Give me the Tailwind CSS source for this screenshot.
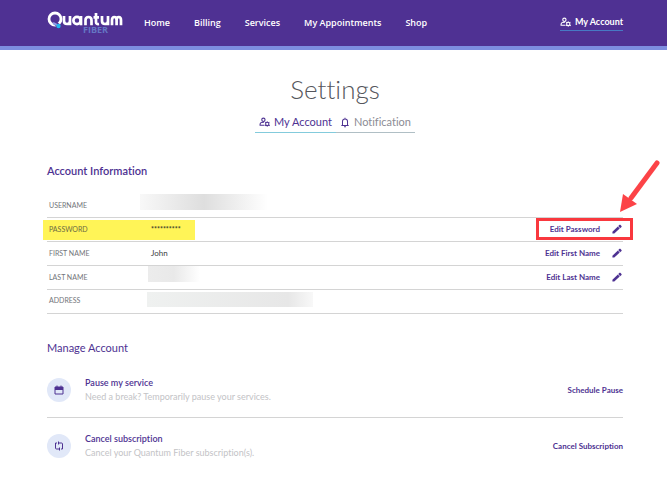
<!DOCTYPE html>
<html lang="en">
<head>
<meta charset="utf-8">
<meta name="viewport" content="width=device-width, initial-scale=1">
<title>Settings - Quantum Fiber</title>
<script src="https://cdn.jsdelivr.net/npm/@tailwindcss/browser@4"></script>
</head>
<body class="bg-white font-['Lato','Open_Sans',sans-serif] text-[#4e3292] [font-variant-ligatures:none]">
<svg class="hidden" aria-hidden="true">
  <symbol id="user-gear" viewBox="0 0 20 18">
    <g fill="none" stroke="currentColor" stroke-width="2">
      <circle cx="8" cy="5" r="3"/>
      <path d="M10 15H2v-2c0-2 3-3.500 7-3.500"/>
      <circle cx="15" cy="12.500" r="3"/>
    </g>
    <path fill="currentColor" d="M14 8h2v2h-2zM14 15h2v2h-2zM10.500 10l1-1.500 1.500 1-1 1.500zM17 15l1.500-1 1.500 1-1 1.500zM10.500 15l1.500-1 1 1.500-1.500 1zM17 9.500l1.500-1 1 1.500-1.500 1z"/>
  </symbol>
  <symbol id="pencil" viewBox="0 0 24 24">
    <path fill="currentColor" d="M1 18.500V23h4.500L18.500 11 14 6zM22.800 7a1.500 1.500 0 0 0 0-2L20 2a1.500 1.500 0 0 0-2 0L15 5l4.500 5z"/>
  </symbol>
</svg>

<header class="flex h-[50px] items-center border-b-4 border-[#7d8de0] bg-[#4f3193] pr-11 pl-[47px] text-white">
  <a href="#" aria-label="Quantum Fiber" class="w-[76px] shrink-0">
    <svg viewBox="0 0 76 24" class="block h-6 w-[76px]">
      <circle cx="8" cy="8" r="6" fill="none" stroke="#fff" stroke-width="2.800"/>
      <path d="M7 11l6 5" stroke="#4f3193" stroke-width="4"/>
      <path d="M6 12l4 2" stroke="#8f9be6" stroke-width="2"/>
      <circle cx="11.500" cy="15" r="2.200" fill="#22b5ee"/>
      <g fill="none" stroke="#fff" stroke-width="2.700">
        <path d="M17 5v5q0 3 3 3t3-3V5M23 9v5.300"/>
        <circle cx="30" cy="9.500" r="3.600"/><path d="M34 5v9.300"/>
        <path d="M38.500 14.300v-5q0-3.300 3-3.300t3 3.300v5"/>
        <path d="M49 2v9q0 2.500 3 2M46.500 6.300H52"/>
        <path d="M55 5v5q0 3 3 3t3-3V5M61 9v5.300"/>
        <path d="M65 14.300v-5q0-3.300 2.300-3.300t2.300 3.300v5M69.600 9.300q0-3.300 2.200-3.300t2.200 3.300v5"/>
      </g>
      <text x="36" y="22" fill="#6577c4" font-family="Open Sans" font-size="9" font-weight="700">FIBER</text>
    </svg>
  </a>
  <nav class="ml-[21px] flex gap-6 font-['Open_Sans',sans-serif] text-[9px] leading-4 font-semibold">
    <a href="#">Home</a>
    <a href="#">Billing</a>
    <a href="#">Services</a>
    <a href="#">My Appointments</a>
    <a href="#">Shop</a>
  </nav>
  <a href="#" class="ml-auto flex items-center gap-1 border-b border-[#4779c4] pb-0.5 text-[9px] leading-3 font-bold">
    <svg class="h-[10px] w-[11px]"><use href="#user-gear"/></svg>
    My Account
  </a>
</header>

<main class="pr-11 pl-[47px]">
  <h1 class="mt-[23px] text-center text-[26px] leading-8 font-light text-[#55565c]">Settings</h1>
  <div class="mt-[9px] flex justify-center text-[11px] leading-4">
    <a href="#" class="flex items-center gap-1 border-b border-[#83cbdc] pr-1 pb-0.5 pl-1">
      <svg class="h-[10px] w-[11px]"><use href="#user-gear"/></svg>
      My Account
    </a>
    <a href="#" class="flex items-center gap-1 border-b border-[#b0bfc5] pr-1 pb-0.5 pl-1 text-[#8c8c94]">
      <svg viewBox="0 0 20 24" class="h-[11px] w-[10px] text-[#4e3292]" fill="none" stroke="currentColor" stroke-width="2.200"><path d="M2 18.500h16M4.500 18V10q0-5.500 5.500-5.500T15.500 10v8M10 1.500V5M8 21.500h4"/></svg>
      Notification
    </a>
  </div>

  <section>
    <h2 class="mt-[30px] text-[11px] leading-4 font-semibold">Account Information</h2>
    <dl class="mt-[15px] text-[7px] leading-3">
      <div class="flex h-6 items-center border-b border-[#d4d4d4] pb-0.5 pl-0.5">
        <dt class="w-[91px] text-[#73757a]">USERNAME</dt>
        <dd class="h-4 w-32 self-start bg-linear-to-r from-[#f8f8f8] via-[#dedede] to-white" aria-label="Hidden"></dd>
      </div>
      <div class="relative flex h-6 items-center border-b border-[#d4d4d4] pb-0.5 pl-0.5">
        <div class="absolute top-0.5 -left-1 h-5 w-[152px] bg-[#fff457]"></div>
        <dt class="relative w-[102px] text-[#6d6b43]">PASSWORD</dt>
        <dd class="relative text-[7px] font-bold text-[#3b3a2a]">**********</dd>
        <dd class="ml-auto"><button class="flex items-center gap-3 pr-px text-[8px] font-bold">Edit Password <svg class="size-[10px]"><use href="#pencil"/></svg></button></dd>
        <div class="pointer-events-none absolute top-0 -right-[10px] h-[22px] w-[97px] border-3 border-[#f9383e]"></div>
        <svg viewBox="0 0 42 54" class="pointer-events-none absolute -top-[60px] -right-[38px] h-[54px] w-[42px]"><path d="M38 5L12 40" stroke="#fc4347" stroke-width="5" stroke-linecap="round"/><path d="M1 54L4 36l14 10z" fill="#fc4347"/></svg>
      </div>
      <div class="flex h-6 items-center border-b border-[#d4d4d4] pb-0.5 pl-0.5">
        <dt class="w-[102px] text-[#73757a]">FIRST NAME</dt>
        <dd class="text-[8px] text-[#3c3d42]">John</dd>
        <dd class="ml-auto"><button class="flex items-center gap-3 pr-px text-[8px] font-bold">Edit First Name <svg class="size-[10px]"><use href="#pencil"/></svg></button></dd>
      </div>
      <div class="flex h-6 items-center border-b border-[#d4d4d4] pb-0.5 pl-0.5">
        <dt class="w-[99px] text-[#73757a]">LAST NAME</dt>
        <dd class="h-4 w-[52px] self-start bg-linear-to-r from-[#ececec] via-[#e9e9e9] to-white" aria-label="Hidden"></dd>
        <dd class="ml-auto"><button class="flex items-center gap-3 pr-px text-[8px] font-bold">Edit Last Name <svg class="size-[10px]"><use href="#pencil"/></svg></button></dd>
      </div>
      <div class="flex h-6 items-center border-b border-[#d4d4d4] pb-1 pl-0.5">
        <dt class="w-[98px] text-[#73757a]">ADDRESS</dt>
        <dd class="h-[15px] w-[166px] bg-linear-to-r from-[#eff1f0] from-0% via-[#e7e7e7] via-85% to-[#f8f8f8]" aria-label="Hidden"></dd>
      </div>
    </dl>
  </section>

  <section>
    <h2 class="mt-[26px] text-[11px] leading-4">Manage Account</h2>
    <ul class="mt-[7px]">
      <li class="flex h-[55px] items-center gap-3.5 border-b border-[#d4d4d4] pb-px">
        <span class="flex size-6 items-center justify-center rounded-full bg-[#e1e8f8]">
          <svg viewBox="0 0 20 20" class="size-[10px]" fill="none" stroke="currentColor" stroke-width="2"><path d="M2 4h16v14H2zM2 9h16M6 1v4M14 1v4"/><path d="M2 6h16" stroke-width="4"/></svg>
        </span>
        <div class="text-[9px] leading-[14px]">
          <h3 class="font-semibold">Pause my service</h3>
          <p class="text-[#c3c3c6]">Need a break? Temporarily pause your services.</p>
        </div>
        <button class="ml-auto text-[8px] font-bold">Schedule Pause</button>
      </li>
      <li class="flex h-14 items-center gap-3.5">
        <span class="flex size-6 items-center justify-center rounded-full bg-[#e1e8f8]">
          <svg viewBox="0 0 20 20" class="size-[10px]" fill="none" stroke="currentColor" stroke-width="2"><path d="M8 16H5q-2 0-2-2V4h3M12 4h3q2 0 2 2v10h-3"/><path d="M8 0v8l4-4zM12 12v8l-4-4z" fill="currentColor" stroke="none"/></svg>
        </span>
        <div class="text-[9px] leading-[14px]">
          <h3 class="font-semibold">Cancel subscription</h3>
          <p class="text-[#c3c3c6]">Cancel your Quantum Fiber subscription(s).</p>
        </div>
        <button class="ml-auto text-[8px] font-bold">Cancel Subscription</button>
      </li>
    </ul>
  </section>
</main>
</body>
</html>
